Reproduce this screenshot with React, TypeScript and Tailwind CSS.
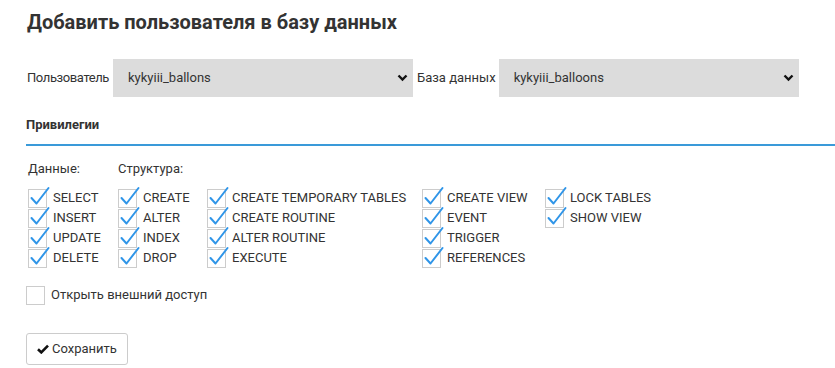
import React from "react";

function Chevron() {
  return (
    <svg width="11" height="8" viewBox="0 0 11 8" className="shrink-0">
      <path d="M1.5 1.5 L5.5 5.5 L9.5 1.5" fill="none" stroke="#111" strokeWidth="2.4" />
    </svg>
  );
}

function FakeSelect({ value }: { value: string }) {
  return (
    <div className="flex h-[38px] w-[300px] items-center justify-between bg-[#dcdcdc] pl-[15px] pr-[5px] text-[13px] text-[#333]">
      <span>{value}</span>
      <Chevron />
    </div>
  );
}

function Check({ label, checked = true }: { label: string; checked?: boolean }) {
  return (
    <div className="flex h-[20px] items-center">
      <div className="relative h-[19px] w-[19px] shrink-0 border border-[#cccccc] bg-white">
        {checked && (
          <svg
            width="20"
            height="22"
            viewBox="0 0 20 22"
            className="absolute left-[1px] top-[-4px] overflow-visible"
          >
            <path d="M1.5 12 L6.5 17.5 L18.5 2" fill="none" stroke="#2f95e8" strokeWidth="2" strokeLinecap="round" strokeLinejoin="round" />
          </svg>
        )}
      </div>
      <span className="ml-[6px] text-[13px] text-[#333]">{label}</span>
    </div>
  );
}

const cols: { w: string; head?: string; items: string[] }[] = [
  { w: "w-[90px]", head: "Данные:", items: ["SELECT", "INSERT", "UPDATE", "DELETE"] },
  { w: "w-[89px]", head: "Структура:", items: ["CREATE", "ALTER", "INDEX", "DROP"] },
  { w: "w-[215px]", items: ["CREATE TEMPORARY TABLES", "CREATE ROUTINE", "ALTER ROUTINE", "EXECUTE"] },
  { w: "w-[123px]", items: ["CREATE VIEW", "EVENT", "TRIGGER", "REFERENCES"] },
  { w: "w-[120px]", items: ["LOCK TABLES", "SHOW VIEW"] },
];

export default function App() {
  return (
    <div
      className="h-[368px] w-[835px] overflow-hidden bg-white pl-[26px] text-[#333]"
      style={{ fontFamily: "Roboto, 'Noto Sans', sans-serif" }}
    >
      <h1 className="pt-[8px] pl-[1px] text-[20px] font-bold leading-[28px] text-[#333]">
        Добавить пользователя в базу данных
      </h1>

      <div className="mt-[23px] flex items-center text-[13px]">
        <span className="ml-[1px] mr-[4px] tracking-[-0.4px]">Пользователь</span>
        <FakeSelect value="kykyiii_ballons" />
        <span className="ml-[4px] mr-[3px]">База данных</span>
        <FakeSelect value="kykyiii_balloons" />
      </div>

      <div className="mt-[20px] text-[13px] font-bold leading-[16px]">Привилегии</div>
      <div className="mt-[11px] h-[2px] bg-[#3a9ad9]" />

      <div className="mt-[13px] flex pl-[2px]">
        {cols.map((c, i) => (
          <div key={i} className={`${c.w} flex flex-col`}>
            <div className="h-[20px] text-[13px] leading-[20px]">{c.head ?? ""}</div>
            <div className="mt-[9px] flex flex-col">
              {c.items.map((it) => (
                <Check key={it} label={it} />
              ))}
            </div>
          </div>
        ))}
      </div>

      <div className="mt-[17px]">
        <Check label="Открыть внешний доступ" checked={false} />
      </div>

      <button className="mt-[28px] flex h-[32px] items-center rounded-[3px] border border-[#cccccc] bg-white px-[10px] text-[13px] text-[#333]">
        <svg width="12" height="10" viewBox="0 0 12 10" className="mr-[3px]">
          <path d="M1 5.2 L4.3 8.4 L11 1.6" fill="none" stroke="#111" strokeWidth="2.6" />
        </svg>
        Сохранить
      </button>
    </div>
  );
}
